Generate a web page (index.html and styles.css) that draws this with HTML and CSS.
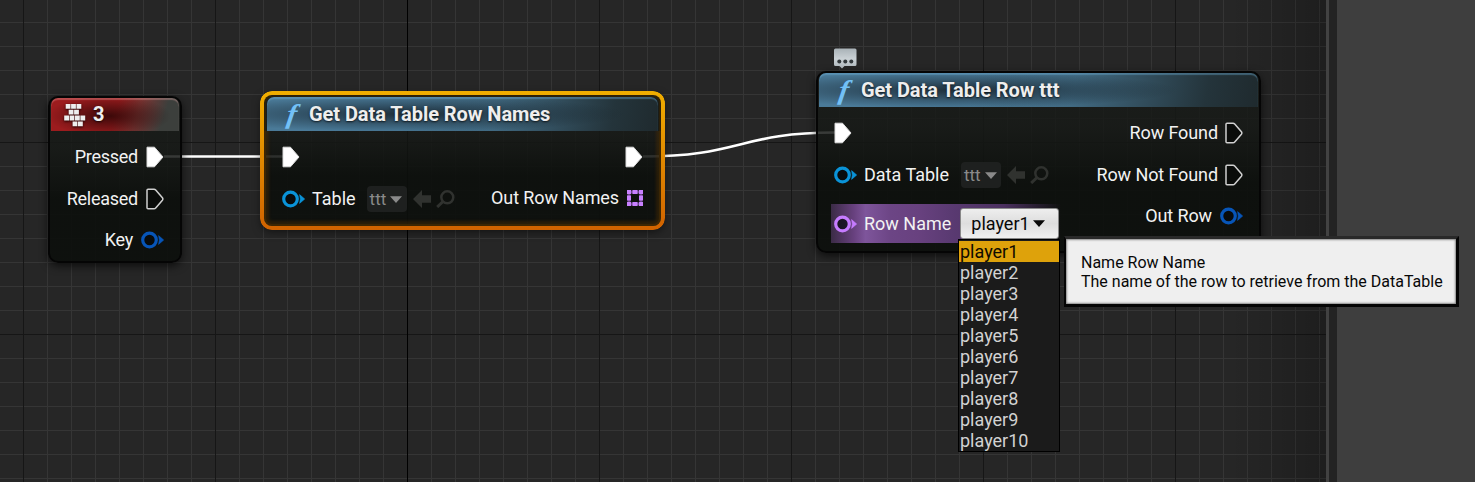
FILE: index.html
```
<!DOCTYPE html>
<html lang="en">
<head>
<meta charset="utf-8">
<title>Blueprint graph</title>
<link rel="stylesheet" href="styles.css">
</head>
<body>
<svg class="defs" width="0" height="0">
  <symbol id="exec" viewBox="0 0 18 22"><path d="M1 1.2H8.5L17 11 8.5 20.8H1z" fill="#fff" stroke="#ddd" stroke-width="1"/></symbol>
  <symbol id="exec-open" viewBox="0 0 18 22"><path d="M2 1.2H8Q9 1.2 9.7 2L16.4 9.8Q17.3 11 16.4 12.2L9.7 20Q9 20.8 8 20.8H2Q1 20.8 1 19.8V2.2Q1 1.2 2 1.2z" fill="#0a0c0a" stroke="#d0d0d0" stroke-width="1.5"/></symbol>
  <symbol id="pin" viewBox="0 0 23 18"><circle cx="8.5" cy="9" r="6.8" fill="#06090c" fill-opacity=".7" stroke="currentColor" stroke-width="3.2"/><path d="M17.6 4.6L22.7 9 17.6 13.4Q19 9 17.6 4.6z" fill="currentColor" stroke="currentColor" stroke-width=".6"/></symbol>
  <symbol id="back" viewBox="0 0 18 18"><path d="M0 9L9 0V5.2H18V12.8H9V18z" fill="currentColor"/></symbol>
  <symbol id="find" viewBox="0 0 19 18"><circle cx="11.3" cy="7.3" r="6" fill="none" stroke="currentColor" stroke-width="2.5"/><path d="M7 11.5L1.2 17" stroke="currentColor" stroke-width="3"/></symbol>
  <symbol id="down" viewBox="0 0 12 7"><path d="M0 .3H12L6 7z" fill="currentColor"/></symbol>
</svg>
<main class="editor">
  <section class="canvas">
    <svg class="wires" width="1326" height="482" fill="none" stroke="#fff" stroke-width="2.6">
      <path d="M164 156.5H283"/>
      <path d="M643 156.5C740 156.5 740 132.5 835 132.5"/>
    </svg>

    <article class="node event">
      <header class="head red">
        <svg class="keys" width="22" height="24" viewBox="0 0 22 24"><path d="M1.7 1h4.8v4.8H1.7zM7.1 1h4.8v4.8H7.1zM12.5 1h4.8v4.8h-4.8zM4.7 6.8h4.8v4.8H4.7zM10.1 6.8h4.8v4.8h-4.8zM.2 12.6H5v4.8H.2zM5.6 12.6h4.8v4.8H5.6zM11 12.6h4.8v4.8H11zM16.4 12.6h4.8v4.8h-4.8zM8.6 18.4h4.8v4.8H8.6zM14 18.4h4.8v4.8H14z" fill="#eee"/></svg>
        <h2 class="title">3</h2>
      </header>
      <div class="body">
        <div class="col out">
          <div class="row">Pressed<svg class="ex"><use href="#exec"/></svg></div>
          <div class="row">Released<svg class="ex"><use href="#exec-open"/></svg></div>
          <div class="row low">Key<svg class="dot struct"><use href="#pin"/></svg></div>
        </div>
      </div>
    </article>

    <article class="node names">
      <header class="head blue"><span class="fn">f</span><h2 class="title">Get Data Table Row Names</h2></header>
      <div class="body">
        <div class="col in">
          <div class="row"><svg class="ex"><use href="#exec"/></svg></div>
          <div class="row"><svg class="dot object"><use href="#pin"/></svg>Table<span class="asset">ttt<svg width="12" height="7"><use href="#down"/></svg></span><svg class="back"><use href="#back"/></svg><svg class="find"><use href="#find"/></svg></div>
        </div>
        <div class="col out">
          <div class="row"><svg class="ex"><use href="#exec"/></svg></div>
          <div class="row low">Out Row Names<svg class="array" width="16" height="16" viewBox="0 0 16 16"><path d="M2 2h12v12H2z" fill="none" stroke="#6c4488" stroke-width="3"/><path d="M0 0h4v4H0zM5.5 0h5v4h-5zM12 0h4v4h-4zM0 5.5h4v5H0zM12 5.5h4v5h-4zM0 12h4v4H0zM5.5 12h5v4h-5zM12 12h4v4h-4z" fill="#c880ff"/></svg></div>
        </div>
      </div>
    </article>

    <svg class="comment" width="24" height="22" viewBox="0 0 24 22">
      <defs><linearGradient id="bubble" x2="0" y2="1"><stop stop-color="#a9b2b7"/><stop offset=".5" stop-color="#c9d0d4"/><stop offset="1" stop-color="#b0b9be"/></linearGradient></defs>
      <path d="M2.5 .5H22Q23.5 .5 23.5 2V16.5Q23.5 18 22 18H11.5L9 20.5 6.5 18H2.5Q1 18 1 16.5V2Q1 .5 2.5 .5z" fill="url(#bubble)"/><g fill="#33393c"><circle cx="6.3" cy="13.5" r="2"/><circle cx="12.3" cy="13.5" r="2"/><circle cx="18.3" cy="13.5" r="2"/></g></svg>

    <article class="node getrow">
      <header class="head blue"><span class="fn">f</span><h2 class="title">Get Data Table Row ttt</h2></header>
      <div class="body">
        <div class="col in">
          <div class="row"><svg class="ex"><use href="#exec"/></svg></div>
          <div class="row"><svg class="dot object"><use href="#pin"/></svg>Data Table<span class="asset">ttt<svg width="12" height="7"><use href="#down"/></svg></span><svg class="back"><use href="#back"/></svg><svg class="find"><use href="#find"/></svg></div>
          <div class="row hover"><svg class="dot name"><use href="#pin"/></svg>Row Name<span class="select">player1<svg width="12" height="7"><use href="#down"/></svg></span></div>
        </div>
        <div class="col out">
          <div class="row">Row Found<svg class="ex"><use href="#exec-open"/></svg></div>
          <div class="row">Row Not Found<svg class="ex"><use href="#exec-open"/></svg></div>
          <div class="row low">Out Row<svg class="dot struct"><use href="#pin"/></svg></div>
        </div>
      </div>
    </article>
  </section>
  <div class="splitter"></div>
  <aside class="details"></aside>
</main>

<ul class="menu">
  <li class="active">player1</li><li>player2</li><li>player3</li><li>player4</li><li>player5</li><li>player6</li><li>player7</li><li>player8</li><li>player9</li><li>player10</li>
</ul>
<div class="tooltip"><p>Name Row Name</p><p>The name of the row to retrieve from the DataTable</p></div>
</body>
</html>
```
FILE: styles.css
```
* { box-sizing: border-box; }
body { margin: 0; overflow: hidden; font-family: Roboto, sans-serif; font-size: 18px; color: #f2f2f2; }
.defs { position: absolute; }
.editor { display: flex; height: 482px; }
.canvas {
  position: relative; width: 1326px; flex: none;
  background:
    linear-gradient(90deg, transparent 1230px, rgba(0,0,0,.22)),
    linear-gradient(#000, #000) 407px 0 / 1px 100% no-repeat,
    repeating-linear-gradient(90deg, #161616 0 1px, transparent 1px 192px) 23px 0 / 1344px 100%,
    repeating-linear-gradient(180deg, #161616 0 1px, transparent 1px 192px) 0 -50px / 100% 576px,
    repeating-linear-gradient(90deg, #353535 0 1px, transparent 1px 24px) -1px 0 / 1344px 100%,
    repeating-linear-gradient(180deg, #353535 0 1px, transparent 1px 24px) 0 -2px / 100% 576px,
    #262626;
}
.splitter { width: 11px; flex: none; background: #232323; border-left: 3px solid #424242; }
.details { flex: 1; background: #3e3e3e; }
.wires { position: absolute; left: 0; top: 0; }

.node {
  position: absolute; border: 2px solid #050505; border-radius: 10px;
  background: linear-gradient(rgba(24,27,24,.82), rgba(22,25,22,.84) 30%, rgba(12,15,12,.92) 62%);
  box-shadow: 0 3px 8px rgba(0,0,0,.65);
}
.event { left: 48px; top: 96px; width: 134px; height: 167px; }
.names { left: 264px; top: 95px; width: 397px; height: 131px; border: 2px solid #2c2008; border-radius: 8px; box-shadow: 0 3px 8px 3px rgba(0,0,0,.5); }
.names::before {
  content: ""; position: absolute; inset: -6px; border-radius: 12px; padding: 4px;
  background: linear-gradient(#f0ae00, #d06200);
  mask: linear-gradient(#000 0 0) content-box exclude, linear-gradient(#000 0 0);
}
.names::after {
  content: ""; position: absolute; inset: -2px; border-radius: 8px; pointer-events: none;
  box-shadow: inset 0 0 3px 5px rgba(80,48,0,.42);
  clip-path: inset(36px 0 0 0);
}
.getrow { left: 816px; top: 71px; width: 445px; height: 182px; }

.head { display: flex; align-items: center; height: 33px; border-radius: 7px 7px 0 0; }
.title { margin: 0; font-size: 20px; font-weight: 700; line-height: 32px; letter-spacing: -.06px; white-space: nowrap; text-shadow: 0 1px 2px rgba(0,0,0,.7); color: #eee; }
.red {
  padding-left: 13px; gap: 7px; margin: 0 1px;
  background: radial-gradient(ellipse 62px 20px at 58px 18px, rgba(35,4,4,.8), transparent),
    linear-gradient(108deg, #9c1c1e 0 50%, #7a3432 66%, #3c3f3c 86%);
  box-shadow: inset 0 2px 1px rgba(255,190,190,.3);
}
.red .title { line-height: 30px; padding-bottom: 2px; }
.blue {
  padding-left: 17px; margin: 0 1px;
  background: radial-gradient(ellipse 220px 18px at 140px 17px, rgba(18,28,36,.8), transparent),
    linear-gradient(100deg, #4a7a98 0 35%, #416a82 58%, #24343b 88%, #1f2a2e);
  box-shadow: inset 0 2px 1px rgba(110,175,215,.4);
}
.names .head { height: 34px; }
.getrow .head { height: 34px; }
.fn { width: 25px; font: italic bold 27px/30px "Liberation Serif", serif; color: #72c0f6; padding-left: 5px; transform: translate(-1px, 0) skewX(-8deg) scaleX(1.12); }
.keys { filter: drop-shadow(0 1px 1px #200); }

.body { display: flex; justify-content: space-between; padding-top: 5px; }
.event .body { justify-content: flex-end; }
.col { display: flex; flex-direction: column; }
.in { padding-left: 16px; }
.out { align-items: flex-end; padding-right: 16px; letter-spacing: -.1px; }
.event .out { letter-spacing: -.25px; }
.row { display: flex; align-items: center; height: 42px; gap: 8px; white-space: nowrap; line-height: 22px; }
.in .row { gap: 7px; }
.out .row { gap: 7px; }
.event .out .row { gap: 8px; }
.out .row.low { height: 40px; gap: 8px; }
.ex { width: 18px; height: 22px; }
.dot { width: 23px; height: 18px; }
.object { color: #0a93d8; }
.struct { color: #0755b8; }
.name { color: #c67cff; }
.asset { display: flex; align-items: center; gap: 4px; width: 40px; height: 26px; padding-left: 3px; margin-left: 4px; border-radius: 4px; background: #1e201f; color: #8a8a8a; font-size: 17px; }
.getrow .asset { margin-left: 5px; }
.back, .find { color: #30322f; }
.row .back { width: 18px; height: 18px; margin-left: -1px; }
.row .find { width: 19px; height: 18px; margin-left: -2px; }
.in .hover {
  height: 39px; margin: 8px 0 0 -3px; padding-left: 3px; width: 230px; gap: 7px;
  background: linear-gradient(90deg, #3b2b46, #68417f 10%, #7e559b 15%, #6c4585 26%, #68417f 38%, #5a3a72 52%, #4b305f 75%, transparent);
}
.select { display: flex; align-items: center; gap: 3px; width: 99px; height: 31px; margin-left: 2px; padding-left: 10px; border: 1px solid #888; border-radius: 3px; background: linear-gradient(#eee, #ddd 50%, #f0f0f0); color: #080808; }
.comment { position: absolute; left: 833px; top: 48px; }

.menu {
  position: absolute; left: 958px; top: 239px; width: 102px; height: 213px;
  margin: 0; padding: 1px 0; list-style: none; border: 1px solid #000; background: #1b1b1b; color: #d2d2d2;
}
.menu li { height: 21px; line-height: 21px; padding-left: 1px; }
.menu .active { background: #dea20b; color: #100c00; }
.tooltip {
  position: absolute; left: 1064px; top: 236px; width: 395px; height: 71px; padding: 14px 15px;
  border: 3px solid #050505; border-top-color: #292929; border-left-width: 2px; background: #efefef; color: #080808;
  box-shadow: inset 0 0 2px 1px #888; font-size: 16px; line-height: 19px; white-space: nowrap;
}
.tooltip p { margin: 0; }
```
